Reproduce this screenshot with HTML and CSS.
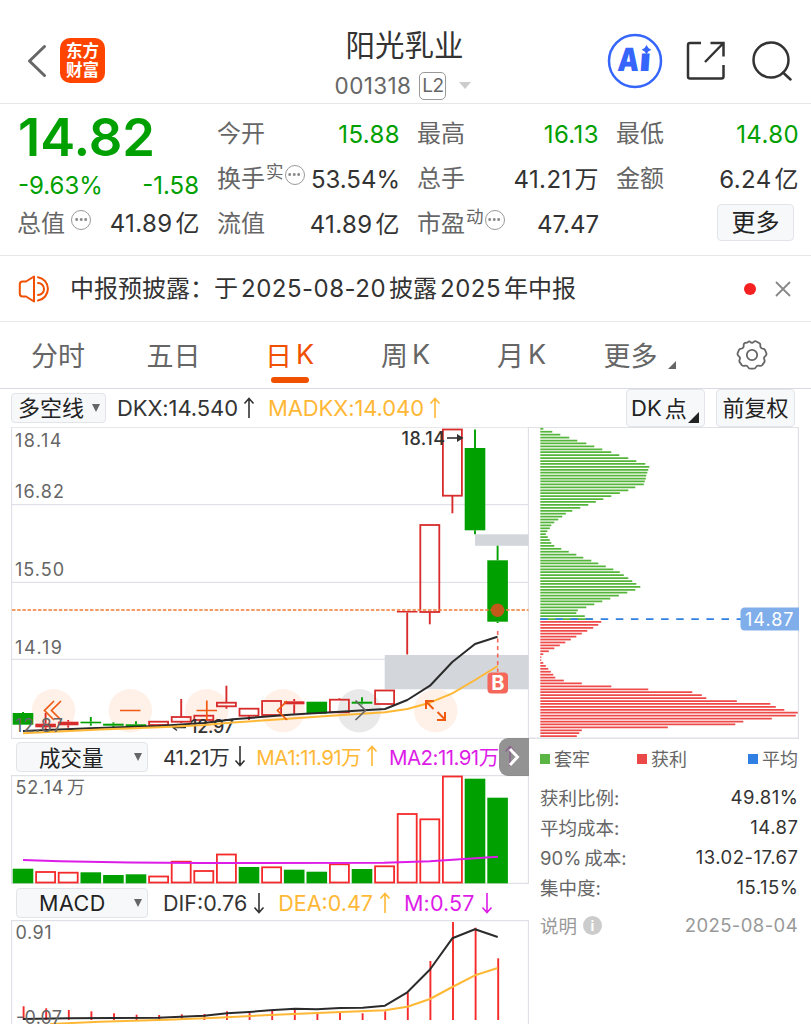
FILE: index.html
```html
<!DOCTYPE html>
<html lang="zh-CN">
<head>
    <meta charset="UTF-8">
    <meta name="viewport" content="width=device-width, initial-scale=1.0">
    <title>阳光乳业 001318</title>
    <link rel="stylesheet" href="styles.css">
</head>
<body>
    <!-- Top bar -->
    <header class="navbar">
        <div class="nav-left">
            <svg class="back" width="20" height="34" viewBox="0 0 20 34"><path d="M17.5 2.5 L2.5 17 L17.5 31.5"/></svg>
            <div class="logo"><span>东方</span><span>财富</span></div>
        </div>
        <div class="nav-title">
            <h1>阳光乳业</h1>
            <div class="code"><span class="code-num">001318</span><span class="level">L2</span><i class="caret"></i></div>
        </div>
        <div class="nav-right">
            <svg width="56" height="56" viewBox="0 0 56 56" class="ai">
                <circle cx="28" cy="28" r="26"/>
                <g transform="skewX(-4)">
                    <text x="12.800" y="38.5" textLength="21.500" lengthAdjust="spacingAndGlyphs">A</text>
                    <text x="34.500" y="38.5" textLength="11.500" lengthAdjust="spacingAndGlyphs">ı</text>
                </g>
                <path d="M39.5 12 Q40.800 15.500 44.300 16.800 Q40.800 18.100 39.5 21.300 Q38.200 18.100 34.700 16.800 Q38.200 15.500 39.5 12Z"/>
            </svg>
            <svg width="40" height="40" viewBox="0 0 40 40" class="line-icon share">
                <path d="M15 2 H4 Q2 2 2 4 V35.5 Q2 37.5 4 37.5 H35.5 Q37.5 37.5 37.5 35.5 V24"/>
                <path d="M24.5 2 H37.5 V15.5 M37 2.5 L19 21"/>
            </svg>
            <svg width="40" height="40" viewBox="0 0 40 40" class="line-icon">
                <circle cx="19" cy="19" r="17.5"/><path d="M31 31.5 L38.5 38.5"/>
            </svg>
        </div>
    </header>

    <!-- Quote summary -->
    <section class="quote">
        <div class="price-col">
            <div class="price">14.82</div>
            <div class="cell down"><span>-9.63%</span><span>-1.58</span></div>
            <div class="cell"><label>总值<i class="more-dot wide"></i></label><b>41.89<em>亿</em></b></div>
        </div>
        <div class="data-col">
            <div class="cell"><label>今开</label><b class="down">15.88</b></div>
            <div class="cell"><label>换手<sup>实</sup><i class="more-dot"></i></label><b class="tight">53.54%</b></div>
            <div class="cell"><label>流值</label><b>41.89<em>亿</em></b></div>
        </div>
        <div class="data-col">
            <div class="cell"><label>最高</label><b class="down">16.13</b></div>
            <div class="cell"><label>总手</label><b>41.21<em>万</em></b></div>
            <div class="cell"><label>市盈<sup>动</sup><i class="more-dot"></i></label><b class="tight">47.47</b></div>
        </div>
        <div class="data-col">
            <div class="cell"><label>最低</label><b class="down">14.80</b></div>
            <div class="cell"><label>金额</label><b>6.24<em>亿</em></b></div>
            <div class="cell"><button class="btn more-btn">更多</button></div>
        </div>
    </section>

    <!-- Notice -->
    <section class="notice">
        <svg width="34" height="28" viewBox="0 0 34 28" class="speaker">
            <path d="M16 1.5 V26.5 L8 21.5 H4.5 Q1.8 21.5 1.8 18.5 V9.500 Q1.8 6.500 4.500 6.500 H8 Z"/>
            <path d="M20 2.200 A11.800 11.800 0 0 1 20 25.500 M20 8 A6 6 0 0 1 20 20"/>
        </svg>
        <p>中报预披露：<span class="gap">于</span><span class="num">2025-08-20</span>披露<span class="num">2025</span>年中报</p>
        <i class="red-dot"></i>
        <svg width="16" height="16" viewBox="0 0 16 16" class="close"><path d="M1 1 L15 15 M15 1 L1 15"/></svg>
    </section>

    <!-- Period tabs -->
    <nav class="tabs">
        <a>分时</a>
        <a>五日</a>
        <a class="active">日<span>K</span></a>
        <a>周<span>K</span></a>
        <a>月<span>K</span></a>
        <a class="tab-more">更多<i class="corner"></i></a>
        <a><svg width="32" height="32" viewBox="0 0 32 32" class="gear">
            <path d="M11.600 3.500 Q13 1.600 14.300 3 Q16 4.600 17.700 3 Q19 1.600 20.400 2.500 L23.500 4.200 Q24.600 5 24.300 6.800 Q24.200 9.200 26.600 9.700 Q28.600 9.900 29.100 11.100 L30.400 14.200 Q30.900 16 29.200 17.300 Q27.400 18.600 28.300 20.500 Q29.200 22.200 28 23.600 L26 26.300 Q25 27.200 22.900 26.600 Q20.800 26.300 20.100 28 Q19.500 29.500 18 29.600 H14 Q12.500 29.500 11.900 28 Q11.200 26.300 9.100 26.600 Q7 27.200 6 26.300 L4 23.600 Q2.800 22.200 3.700 20.500 Q4.600 18.600 2.800 17.300 Q1.100 16 1.600 14.200 L2.900 11.100 Q3.400 9.900 5.400 9.700 Q7.800 9.200 7.700 6.800 Q7.400 5 8.500 4.200 Z"/>
            <circle cx="16" cy="16" r="5.200"/>
        </svg></a>
    </nav>

    <!-- Indicator toolbar -->
    <div class="toolbar">
        <button class="btn pick"><span>多空线</span><i class="tri"></i></button>
        <span class="ind dkx">DKX:14.540<svg class="arr" viewBox="0 0 12 22"><path d="M6 21 V1.500 M1.500 6.500 L6 1.500 L10.500 6.500"/></svg></span>
        <span class="ind madkx">MADKX:14.040<svg class="arr" viewBox="0 0 12 22"><path d="M6 21 V1.500 M1.500 6.500 L6 1.500 L10.500 6.500"/></svg></span>
        <button class="btn dk">DK<span>点</span><i class="corner dark"></i></button>
        <button class="btn adj">前复权</button>
    </div>

    <main class="content">
        <div class="charts">
            <svg id="kline" width="518" height="312" viewBox="11 427 518 312"></svg>

            <div class="sub-head">
                <button class="btn select"><span>成交量</span><i class="tri"></i></button>
                <span class="ind vol">41.21万<svg class="arr" viewBox="0 0 12 22"><path d="M6 1 V20.500 M1.500 15.500 L6 20.500 L10.500 15.500"/></svg></span>
                <span class="ind ma1">MA1:11.91万<svg class="arr" viewBox="0 0 12 22"><path d="M6 21 V1.500 M1.500 6.500 L6 1.500 L10.500 6.500"/></svg></span>
                <span class="ind ma2">MA2:11.91万<svg class="arr" viewBox="0 0 12 22"><path d="M6 21 V1.500 M1.500 6.500 L6 1.500 L10.500 6.500"/></svg></span>
                <div class="slide"><svg width="12" height="20" viewBox="0 0 12 20"><path d="M2 2 L9.500 10 L2 18"/></svg></div>
            </div>
            <svg id="volume" width="518" height="109" viewBox="11 775 518 109"></svg>

            <div class="sub-head macd-head">
                <button class="btn select macd">MACD<i class="tri"></i></button>
                <span class="ind dif">DIF:0.76<svg class="arr" viewBox="0 0 12 22"><path d="M6 1 V20.500 M1.500 15.500 L6 20.500 L10.500 15.500"/></svg></span>
                <span class="ind dea">DEA:0.47<svg class="arr" viewBox="0 0 12 22"><path d="M6 21 V1.500 M1.500 6.500 L6 1.500 L10.500 6.500"/></svg></span>
                <span class="ind m">M:0.57<svg class="arr" viewBox="0 0 12 22"><path d="M6 1 V20.500 M1.500 15.500 L6 20.500 L10.500 15.500"/></svg></span>
            </div>
            <svg id="macd" width="518" height="104" viewBox="11 920 518 104"></svg>
        </div>

        <aside class="chips">
            <svg id="chips" width="270" height="312" viewBox="529 427 270 312"></svg>
            <div class="legend">
                <span class="trap">套牢</span><span class="profit">获利</span><span class="avg">平均</span>
            </div>
            <dl>
                <div><dt>获利比例:</dt><dd>49.81%</dd></div>
                <div><dt>平均成本:</dt><dd>14.87</dd></div>
                <div><dt><span class="pct">90%</span>成本:</dt><dd>13.02-17.67</dd></div>
                <div><dt>集中度:</dt><dd>15.15%</dd></div>
            </dl>
            <div class="explain"><span>说明</span><i>i</i><time>2025-08-04</time></div>
        </aside>
    </main>

    <script src="charts.js"></script>
</body>
</html>
```
FILE: styles.css
```css
* {
    margin: 0;
    padding: 0;
    box-sizing: border-box;
}

body {
    width: 811px;
    height: 1024px;
    overflow: hidden;
    background: #fff;
    color: #333;
    font-family: Inter, "Noto Sans CJK SC", sans-serif;
    font-size: 24px;
}

svg {
    display: block;
    fill: none;
}

i, em {
    font-style: normal;
}

b {
    font-weight: 400;
}

/* Top bar */
.navbar {
    height: 104px;
    padding: 18px 19px 0 27px;
    display: grid;
    grid-template-columns: 200px 1fr 210px;
    border-bottom: 1.5px solid #e6e6e8;
}

.nav-left, .nav-right {
    display: flex;
    align-items: center;
    height: 85px;
}

.back {
    stroke: #666;
    stroke-width: 3;
    stroke-linecap: round;
    stroke-linejoin: round;
    margin-right: 13px;
}

.logo {
    width: 45px;
    height: 45px;
    border-radius: 10px;
    background: #ff4400;
    color: #fff;
    font-weight: 700;
    font-size: 16.5px;
    line-height: 19px;
    display: flex;
    flex-direction: column;
    align-items: center;
    justify-content: center;
}

.nav-title {
    display: flex;
    flex-direction: column;
    align-items: center;
}

.nav-title h1 {
    font-weight: 400;
    font-size: 29.5px;
    line-height: 54px;
    color: #333;
}

.code {
    display: flex;
    align-items: center;
    height: 27px;
    color: #666;
    font-size: 22.500px;
    letter-spacing: 0.4px;
    margin-left: -3px;
}

.level {
    width: 27px;
    height: 28px;
    margin: 0 13px 0 8px;
    border: 1.5px solid #999;
    border-radius: 5px;
    font-size: 19px;
    line-height: 26px;
    text-align: center;
    letter-spacing: -0.5px;
}

.caret {
    border: 6.5px solid transparent;
    border-top: 7px solid #ccc;
    border-bottom: 0;
}

.nav-right {
    justify-content: flex-end;
}

.ai {
    margin-right: 23px;
}

.ai circle {
    stroke: #3565fb;
    stroke-width: 2.5;
}

.ai text {
    fill: #3565fb;
    font: 900 32px Inter, sans-serif;
}

.ai path {
    fill: #3565fb;
}

.line-icon {
    stroke: #333;
    stroke-width: 2.5;
    stroke-linecap: round;
}

.share {
    margin-right: 26px;
    stroke-linecap: butt;
}

/* Quote summary */
.quote {
    height: 152px;
    padding: 8px 13px 0 18px;
    display: grid;
    grid-template-columns: 181px 181px 180px 181px;
    column-gap: 19px;
    border-bottom: 1.5px solid #e6e6e8;
}

.price {
    height: 52px;
    line-height: 50px;
    font-size: 52.500px;
    font-weight: 600;
    color: #00a000;
}

.cell {
    height: 45px;
    display: flex;
    justify-content: space-between;
    align-items: center;
    white-space: nowrap;
    line-height: 30px;
}

.price-col .cell {
    height: 42px;
}

.price-col .cell.down {
    height: 39px;
    padding-top: 5px;
}

.cell label {
    display: flex;
    align-items: center;
    margin-left: -1px;
    color: #666;
}

.data-col label {
    padding-bottom: 1px;
}

.cell b {
    letter-spacing: 0.4px;
    margin-right: -1px;
}

.cell b.tight {
    letter-spacing: 0;
}

.cell label sup {
    font-size: 17.500px;
    line-height: 20px;
    margin: -14px 0 0 1px;
}

.cell em {
    margin-left: 3px;
}

.down {
    color: #00a000 !important;
}

/* circled ellipsis */
.more-dot {
    width: 20px;
    height: 20px;
    margin: -9px 0 0 1px;
    border: 1.5px solid #999;
    border-radius: 50%;
    background: radial-gradient(circle at center, #888 1.1px, transparent 1.600px) center / 4.500px 4.500px repeat-x;
    background-clip: content-box;
    padding: 0 1.800px;
}

.more-dot.wide {
    margin-left: 6px;
}

.btn {
    border: 1.5px solid #e3e4ea;
    border-radius: 4px;
    background: #f6f8fa;
    color: #222;
    font: inherit;
    white-space: nowrap;
}

.more-btn {
    width: 77px;
    height: 37px;
    margin: -4px 4px 0 auto;
    line-height: 32px;
}

/* Notice */
.notice {
    height: 66px;
    padding: 0 20px 0 18px;
    display: flex;
    align-items: center;
    border-bottom: 1.5px solid #e9e9eb;
}

.speaker {
    stroke: #f05000;
    stroke-width: 2;
    stroke-linejoin: round;
    stroke-linecap: round;
}

.notice p {
    margin-left: 18px;
    padding-bottom: 4px;
    flex: 1;
    white-space: nowrap;
}

.notice .num {
    margin: 0 3px;
    letter-spacing: 0.5px;
}

.red-dot {
    width: 12px;
    height: 12px;
    border-radius: 50%;
    background: #f52020;
    margin-right: 19px;
}

.close {
    stroke: #888;
    stroke-width: 1.8;
}

/* Period tabs */
.tabs {
    height: 67px;
    display: grid;
    grid-template-columns: 116px 115px 117px 115px 117px 119px 106px;
    border-bottom: 1.5px solid #d9d9e2;
    font-size: 27px;
    color: #666;
}

.tabs a {
    display: flex;
    justify-content: center;
    align-items: center;
    position: relative;
    padding-bottom: 1px;
}

.tabs a span {
    margin-left: 4px;
}

.tabs .active {
    color: #f05000;
}

.tabs .active::after {
    content: "";
    position: absolute;
    left: 40px;
    bottom: 5px;
    width: 38px;
    height: 6px;
    border-radius: 3px;
    background: #f05000;
}

.corner {
    align-self: flex-end;
    border-left: 8px solid transparent;
    border-bottom: 8px solid #666;
}

.tab-more .corner {
    margin: 0 0 18px 10px;
}

.gear {
    stroke: #666;
    stroke-width: 1.8;
}

/* Indicator toolbar */
.toolbar {
    height: 38px;
    padding: 0 16px 0 11px;
    display: flex;
    align-items: center;
    font-size: 22px;
}

.tri {
    border: 4.500px solid transparent;
    border-top: 8px solid #666;
    border-bottom: 0;
}

.pick {
    width: 95px;
    height: 30px;
    display: flex;
    align-items: center;
    justify-content: space-between;
    padding: 0 5px 1px 6px;
}

.pick span {
    margin-top: -4px;
}

.select span {
    margin-top: -2px;
}

.ind {
    display: flex;
    align-items: center;
    white-space: nowrap;
}

.arr {
    width: 12px;
    height: 22px;
    stroke: currentColor;
    stroke-width: 1.600;
}

.dkx {
    margin-left: 11px;
    letter-spacing: -0.1px;
}

.dkx .arr, .madkx .arr {
    margin-left: 5px;
}

.madkx, .ma1, .dea {
    color: #ffb836;
}

.madkx {
    margin-left: 13px;
    letter-spacing: -0.1px;
}

.dk {
    width: 79px;
    height: 38px;
    margin: 0 11px 0 auto;
    display: flex;
    align-items: center;
    padding-left: 4px;
}

.dk span {
    margin: -3px 0 0 3px;
}

.corner.dark {
    border-left-width: 11px;
    border-bottom: 11px solid #222;
    margin: 0 0 3px 1px;
}

.adj {
    width: 79px;
    height: 38px;
    padding-bottom: 4px;
}

/* Charts */
.content {
    display: flex;
}

.charts {
    width: 518px;
    margin-left: 11px;
}

.sub-head {
    height: 36px;
    padding-left: 5px;
    display: flex;
    align-items: center;
    position: relative;
    font-size: 21.500px;
}

.macd-head {
    padding-top: 1px;
}

.select {
    width: 132px;
    height: 30px;
    padding: 0 5px 0 22px;
    display: flex;
    align-items: center;
    justify-content: space-between;
}

.macd {
    letter-spacing: 0.5px;
}

.vol {
    margin-left: 15px;
    padding-bottom: 2px;
    font-size: 20.500px;
    letter-spacing: -0.35px;
}

.ma1, .ma2 {
    margin-left: 10px;
    padding-bottom: 2px;
    font-size: 20.500px;
    letter-spacing: -0.550px;
}

.ma2 {
    margin-left: 11px;
}

.ma2, .m {
    color: #dd1ce8;
}

.vol .arr, .ma1 .arr, .ma2 .arr {
    margin-left: 5px;
}

.slide {
    position: absolute;
    right: 0;
    top: -1px;
    width: 30px;
    height: 38px;
    border-radius: 9px 0 0 9px;
    background: rgba(120, 120, 120, 0.8);
    display: flex;
    align-items: center;
    justify-content: center;
}

.slide svg {
    stroke: #fff;
    stroke-width: 3;
}

.dif {
    margin-left: 15px;
}

.dea {
    margin-left: 13px;
}

.m {
    margin-left: 13px;
    letter-spacing: 0.15px;
}

.dif .arr, .dea .arr, .m .arr {
    margin-left: 6px;
}

.charts text, .chips text {
    fill: #666;
    font-size: 18px;
}

.charts .mark {
    fill: #333;
    font-weight: 500;
}

/* Chip distribution */
.chips {
    width: 270px;
    font-size: 18.500px;
    color: #666;
}

.chips .tag {
    fill: #fff;
}

.legend {
    height: 38px;
    padding-left: 11px;
    display: grid;
    grid-template-columns: 97px 111px auto;
    align-items: center;
    font-size: 18px;
    white-space: nowrap;
}

.legend span::before {
    content: "";
    display: inline-block;
    width: 10px;
    height: 10px;
    margin-right: 4px;
    vertical-align: 2px;
    background: #5ab545;
}

.legend .profit::before {
    background: #eb4848;
}

.legend .avg::before {
    background: #3080e4;
}

.chips dl {
    padding: 5px 1px 0 11px;
}

.chips dl div {
    height: 30px;
    display: flex;
    justify-content: space-between;
    align-items: center;
}

.chips dd {
    color: #333;
    letter-spacing: 0.5px;
    margin-right: -0.500px;
}

.pct {
    margin-right: 3px;
}

.explain {
    height: 46px;
    padding: 0 1px 0 11px;
    display: flex;
    align-items: center;
    color: #999;
}

.explain i {
    width: 19px;
    height: 19px;
    margin-left: 6px;
    border-radius: 50%;
    background: #ccc;
    color: #fff;
    font-size: 14px;
    font-weight: 700;
    line-height: 19px;
    text-align: center;
}

.explain time {
    margin-left: auto;
    letter-spacing: 0.4px;
}
```
FILE: charts.js
```js
const RED = '#d82c2c';
const GREEN = '#00a000';
const BRIGHT = '#f52a2a';
const STEP = 22.6;

const px = i => 23 + i * STEP;

const rect = (x, y, w, h, attrs) => `<rect x="${x}" y="${y}" width="${w}" height="${h}" ${attrs}/>`;
const line = (x1, y1, x2, y2, attrs) => `<path d="M${x1} ${y1} L${x2} ${y2}" ${attrs}/>`;
const poly = (pts, color) => `<polyline points="${pts}" stroke="${color}" stroke-width="2" stroke-linejoin="round"/>`;
const text = (x, y, w, s, cls = '') => `<text x="${x}" y="${y}" textLength="${w}" class="${cls}">${s}</text>`;

function frame(top, bottom) {
    return `<path d="M11.500 ${bottom} V${top} H528.500 V${bottom} Z" stroke="#e0e1e6" stroke-width="1.300"/>`;
}

// [type, body top, body bottom, high, low]; r = hollow red, f = filled red, g = green
const candles = [
    ['g', 713, 724.7, 712, 724.7], ['f', 723.7, 727.3, 713, 729], ['f', 721.7, 725.3, 720, 727.7],
    ['g', 721.7, 723.3, 717, 725.7], ['g', 723.7, 725.7, 722.3, 727], ['g', 724.3, 726, 721.3, 727],
    ['r', 721.7, 725, 721.7, 728], ['r', 717, 721.7, 699, 723], ['r', 715.7, 720, 715.7, 721],
    ['r', 702.7, 706.3, 685.7, 708.7], ['r', 708.7, 715.7, 708.7, 720], ['r', 701, 715, 701, 715],
    ['f', 701.3, 704.3, 699, 713.7], ['g', 701.7, 713.7, 701.7, 713.7], ['r', 699.7, 712.3, 698.3, 712.3],
    ['g', 701.7, 703.7, 697.3, 704.5], ['r', 690.5, 704, 690.5, 704], ['f', 611, 612.5, 611, 654.5],
    ['r', 525, 612, 525, 624.3], ['r', 429.5, 495.7, 429.5, 513.3], ['g', 448, 530.3, 429.5, 534.3],
    ['g', 560.3, 621.7, 545.7, 623]
];

function drawKline() {
    let s = frame(427, 738.3);
    [504.7, 582.3, 659.3].forEach(y => s += line(12, y, 528, y, 'stroke="#e0e1ea" stroke-width="1.300"'));
    s += rect(475, 534.3, 53.5, 11.5, 'fill="#d3d6db"') + rect(384.7, 655, 143.800, 34.300, 'fill="#d3d6db"');

    // zoom / pan buttons
    [53.5, 130.3, 206.8, 283, 359.3, 435.7].forEach((x, i) => {
        s += `<circle cx="${x}" cy="710.700" r="21.700" fill="${i === 4 ? '#e9e9e9' : '#fff0e8'}"/>`;
    });

    candles.forEach(([t, top, bottom, high, low], i) => {
        const x = px(i), c = t === 'g' ? GREEN : RED;
        if (high < top) s += line(x, high, x, top, `stroke="${c}" stroke-width="1.900"`);
        if (low > bottom) s += line(x, bottom, x, low, `stroke="${c}" stroke-width="1.900"`);
        s += t === 'r'
            ? rect(x - 9.5, top, 19, bottom - top, `stroke="${c}" stroke-width="1.800"`)
            : rect(x - 10.3, top, 20.6, bottom - top, `fill="${c}"`);
    });

    s += text(190, 733, 44, '12.97', 'mark') + text(401.5, 445, 43.5, '18.14', 'mark');
    s += '<path d="M186 727.500 H173 M177 724.500 L173 727.500 L177 730.500" stroke="#333" stroke-width="1.400"/>';
    s += '<path d="M447 438 H460" stroke="#333" stroke-width="1.600"/><path d="M457 434 L463.500 438 L457 442Z" fill="#333"/>';

    s += poly('23,731 90,728.3 158,726 204,723 233,719.3 270,716.3 293,714.5 340,711.8 360,710.5 385,709 407.3,700 430,685.7 452.3,662 475,644 497.5,636.7', '#2b2b2b');
    s += poly('23,733.2 100,729.5 166,727 204,725 233,722.5 270,720 327,716 385,712.3 407.3,709 430,702.7 452.3,693.3 475,680 497.7,666', '#ffb836');

    s += line(12, 610, 528.5, 610, 'stroke="#f07a35" stroke-width="1.500" stroke-dasharray="3.500 1.700"');
    s += '<circle cx="497.600" cy="610.300" r="6.700" fill="#c3581b"/>';
    s += line(497.7, 631, 497.7, 672, 'stroke="#f4675a" stroke-width="1.600" stroke-dasharray="4 3.500"');
    s += rect(487.5, 672.5, 20.5, 21, 'rx="4" fill="#f4675a"');
    s += '<text x="491.200" y="690" style="fill:#fff;font-weight:700;font-size:20px">B</text>';

    // button glyphs
    s += '<g stroke="#f05a10" stroke-width="1.700">';
    s += '<path d="M54 701 L44.500 710.500 L54 720 M61 701 L51.500 710.500 L61 720"/>';
    s += '<path d="M120 710.500 H140.500 M196.500 710.500 H217 M206.800 700.500 V720.500"/>';
    s += '<path d="M287 701 L277.500 710.500 L287 720"/>';
    s += '<path d="M426 701.500 L433.500 709 M426 709 V701 H434 M437.500 712 L445 719.500 M445 712 V720 H437" stroke-width="2"/></g>';
    s += '<path d="M355.500 700.500 L365.500 710.500 L355.500 720" stroke="#666" stroke-width="1.700"/>';

    s += text(15, 446.5, 46.500, '18.14') + text(15, 498, 49, '16.82') + text(15, 576, 49, '15.50')
       + text(15, 654, 47, '14.19') + text(15, 731.7, 48, '12.87');
    document.getElementById('kline').innerHTML = s;
}

const volumes = [
    ['g', 868.7], ['r', 872], ['r', 872.7], ['g', 872.3], ['g', 875], ['g', 874.3], ['r', 876.5], ['r', 861.7],
    ['r', 871], ['r', 854.5], ['g', 867], ['r', 867.3], ['g', 869.7], ['g', 871.7], ['r', 864.3], ['g', 869],
    ['r', 866.3], ['r', 814], ['r', 819.3], ['r', 776.5], ['g', 778.7], ['g', 797.7]
];

function drawVolume() {
    let s = frame(775.5, 883.5);
    volumes.forEach(([t, top], i) => {
        const x = px(i);
        s += t === 'r'
            ? rect(x - 9.5, top, 19, 882.5 - top, `stroke="${BRIGHT}" stroke-width="1.800"`)
            : rect(x - 10.3, top, 20.6, 883.3 - top, `fill="${GREEN}"`);
    });
    s += poly('23,860 60,861.3 130,862.5 200,863 384,862.8 430,861.3 498,856.7', '#dd1ce8');
    s += text(15.5, 794, 48, '52.14') + text(67, 793.5, 18, '万');
    document.getElementById('volume').innerHTML = s;
}

const bars = [1006.3, 1008.3, 1010, 1011.3, 1013.3, 1014.7, 1015, 1014.3, 1014, 1011.3, 1012.7,
    1010, 1009.3, 1013.3, 1012.7, 1013.3, 1011.3, 992.3, 961, 922, 927.7, 958.3];

function drawMacd() {
    let s = frame(920.5, 1030);
    bars.forEach((y, i) => s += line(px(i) + 0.6, y, px(i) + 0.6, 1020, `stroke="${BRIGHT}" stroke-width="1.900"`));
    s += poly('23,1019 68,1018.2 158,1017.8 204,1015.8 227,1013.3 249,1012 270,1010.3 295,1008.7 317,1009.3 340,1008 362.7,1007.7 385,1005.7 407.3,992.3 430,969.5 452.3,938.3 475,929.3 497.7,937', '#2b2b2b');
    s += poly('50,1024 100,1021.7 167,1019.7 217,1017.7 270,1015 317,1013 385,1010.3 407.3,1006.7 430,999 452.3,987 475,975.3 497.7,968', '#ffb836');
    s += text(15.5, 939.3, 36, '0.91') + text(16, 1023.5, 46, '-0.07');
    document.getElementById('macd').innerHTML = s;
}

// bar lengths of the cost distribution, from the highest price down
const trapped = [3, 12, 20, 29, 37, 46, 54, 62, 71, 79, 88, 96, 105, 109, 108, 107, 106, 105.5, 104.5, 103.5, 95, 88,
    79.5, 71, 63, 55.5, 48, 40, 32, 25.5, 22, 18, 14, 11, 9.5, 7, 5.5, 7.5, 9.5, 11, 14, 21, 28.5, 36, 43, 51, 58,
    65.5, 73, 79.5, 83.5, 88, 92, 96, 100, 95, 87, 78.5, 70, 62, 54, 46, 37.5, 36, 44.5, 52];
const profit = [61, 58, 53, 47, 41.5, 36, 30.5, 25, 19.5, 14, 8.5, 3, 1, 1, 3, 5.5, 8, 10.5, 13, 15, 23.5, 41.5, 71,
    108, 152, 161.5, 166, 196.5, 230, 235.5, 244, 257.5, 255.5, 231.5, 203, 195, 127.5, 41.5, 39, 36.5];

function drawChips() {
    let s = '<path d="M529 427.300 H798.500 V738.300 H529" stroke="#e0e1e6" stroke-width="1.400"/>';
    trapped.concat(profit).forEach((w, i) => {
        const y = (428.8 + i * 2.927).toFixed(2);
        const c = i < trapped.length ? '#54b53a' : '#ee4a4a';
        s += line(540.3, y, 540.3 + w, y, `stroke="${c}" stroke-width="1.750"`);
    });
    s += line(540.3, 619.2, 741, 619.2, 'stroke="#3080e4" stroke-width="1.700" stroke-dasharray="7.500 7.600"');
    s += '<path d="M799 607.500 H745 Q740.500 607.500 740.500 612 V626 Q740.500 630.500 745 630.500 H799Z" fill="#80aeea"/>';
    s += text(745, 625.7, 48.500, '14.87', 'tag');
    document.getElementById('chips').innerHTML = s;
}

drawKline();
drawVolume();
drawMacd();
drawChips();
```
